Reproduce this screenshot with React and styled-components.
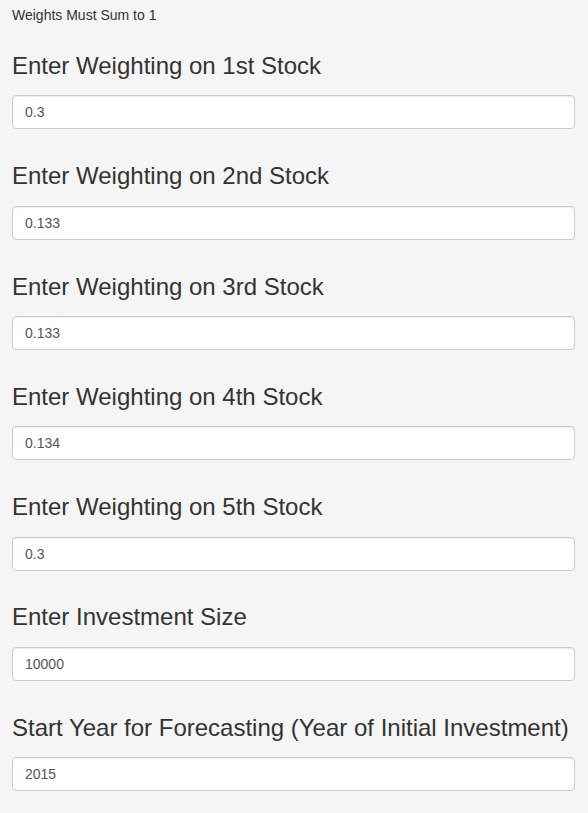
import styled, { createGlobalStyle } from 'styled-components';

const GlobalStyle = createGlobalStyle`
   html, body {
      margin: 0;
      padding: 0;
      background-color: #f5f5f5;
   }
   body {
      font-family: "Liberation Sans", Arial, sans-serif;
      color: #333;
   }
`;

const Panel = styled.div`
   padding: 5px 13px 0 12px;
   background-color: #f5f5f5;
`;

const Note = styled.div`
   font-size: 14px;
   line-height: 20px;
   margin-bottom: 28px;
`;

const Group = styled.div`
   display: flex;
   flex-direction: column;
   margin-bottom: 33.9px;
`;

const Label = styled.label`
   font-size: 24px;
   line-height: 26.4px;
   font-weight: 400;
   margin-bottom: 16px;
`;

const Input = styled.input`
   box-sizing: border-box;
   height: 34px;
   width: 100%;
   padding: 6px 12px;
   border: 1px solid #ccc;
   border-radius: 4px;
   background-color: #fff;
   font-family: "Liberation Sans", Arial, sans-serif;
   font-size: 14px;
   color: #555;
   box-shadow: inset 0 1px 1px rgba(0, 0, 0, 0.075);
   outline: none;
`;

const fields = [
   { label: 'Enter Weighting on 1st Stock', value: '0.3' },
   { label: 'Enter Weighting on 2nd Stock', value: '0.133' },
   { label: 'Enter Weighting on 3rd Stock', value: '0.133' },
   { label: 'Enter Weighting on 4th Stock', value: '0.134' },
   { label: 'Enter Weighting on 5th Stock', value: '0.3' },
   { label: 'Enter Investment Size', value: '10000' },
   { label: 'Start Year for Forecasting (Year of Initial Investment)', value: '2015' },
];

const App = () => (
   <>
      <GlobalStyle />
      <Panel>
         <Note>Weights Must Sum to 1</Note>
         {fields.map((field, i) => (
            <Group key={i}>
               <Label htmlFor={`field-${i}`}>{field.label}</Label>
               <Input id={`field-${i}`} type="text" defaultValue={field.value} />
            </Group>
         ))}
      </Panel>
   </>
);

export default App;
